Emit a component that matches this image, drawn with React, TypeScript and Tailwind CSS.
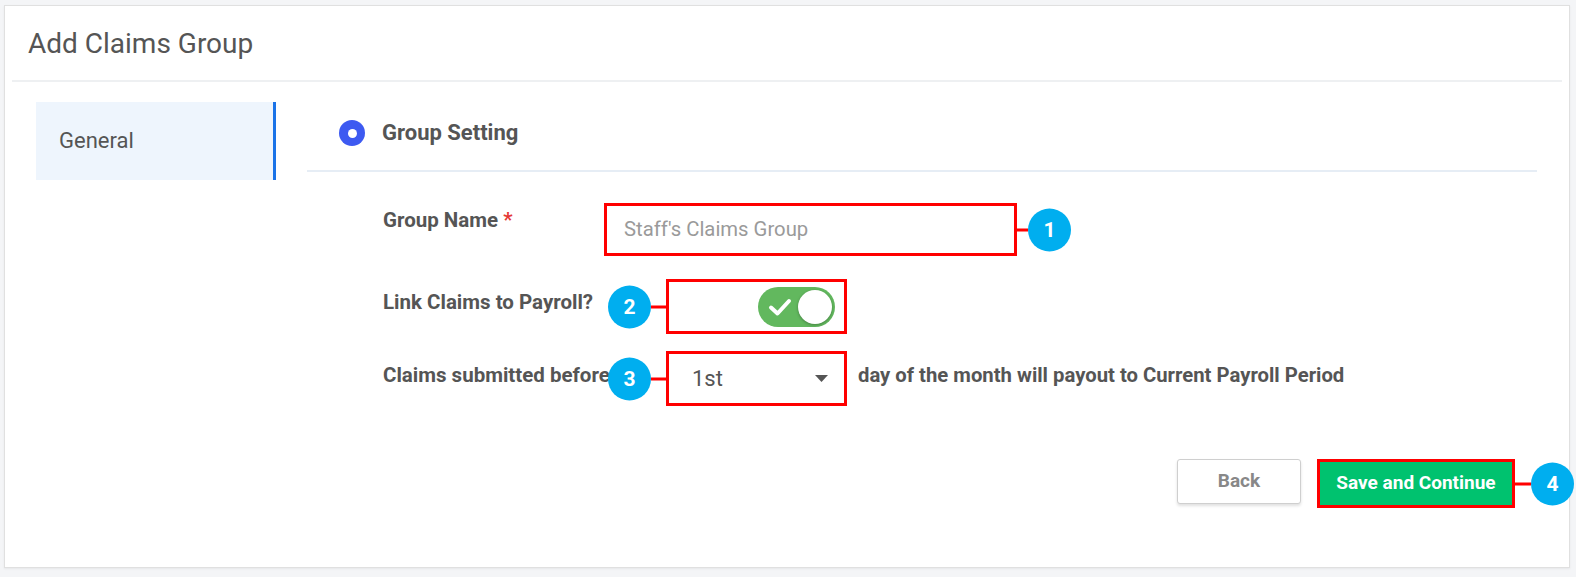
import React from "react";

function Badge({ n }: { n: string }) {
  return (
    <div className="flex h-[43px] w-[43px] items-center justify-center rounded-full bg-[#00aeef] text-[21px] font-bold leading-none text-white">
      {n}
    </div>
  );
}

export default function App() {
  return (
    <div
      className="min-h-[577px] w-[1576px] bg-[#f4f5f7] pl-[4px] pt-[5px]"
      style={{ fontFamily: "Roboto, 'Liberation Sans', sans-serif" }}
    >
      <div className="relative h-[563px] w-[1566px] border border-[#e0e0e0] bg-white shadow-[0_1px_2px_rgba(0,0,0,0.06)]">
        {/* Header */}
        <div className="flex h-[74px] items-center pl-[23px] pt-[2px]">
          <h1 className="text-[28px] font-normal leading-none text-[#555]">Add Claims Group</h1>
        </div>
        <div className="mx-[7px] h-[2px] bg-[#eef0f2]" />

        {/* Body */}
        <div className="flex pt-[20px]">
          {/* Sidebar */}
          <div className="ml-[31px] w-[240px]">
            <div className="flex h-[78px] items-center border-r-[3px] border-[#1a73e8] bg-[#eef5fd] pl-[23px] text-[22px] leading-none text-[#555]">
              General
            </div>
          </div>

          {/* Content */}
          <div className="ml-[31px] w-[1230px]">
            <div className="flex h-[60px] items-center pl-[32px] pt-[2px]">
              <div className="flex h-[26px] w-[26px] items-center justify-center rounded-full bg-[#3d5af1]">
                <div className="h-[9px] w-[9px] rounded-full bg-white" />
              </div>
              <span className="ml-[17px] text-[22px] font-bold leading-none text-[#555]">Group Setting</span>
            </div>
            <div className="mt-[8px] h-[2px] bg-[#e6edf5]" />

            {/* Row 1 */}
            <div className="mt-[31px] flex pl-[76px]">
              <div className="w-[221px] pt-[2px] text-[20.5px] font-bold text-[#555]">
                Group Name <span className="text-[#e53935]">*</span>
              </div>
              <div className="relative flex h-[53px] w-[413px] items-center border-[3px] border-[#ff0000] pl-[17px] text-[20.3px] text-[#9a9a9a]">
                Staff's Claims Group
                <div className="absolute left-full top-1/2 h-[3px] w-[14px] -translate-y-1/2 bg-[#ff0000]" />
                <div className="absolute left-[calc(100%+14px)] top-1/2 -translate-y-1/2">
                  <Badge n="1" />
                </div>
              </div>
            </div>

            {/* Row 2 */}
            <div className="mt-[23px] flex items-center pl-[76px]">
              <div className="w-[221px] -translate-y-[4px] whitespace-nowrap text-[20.5px] font-bold text-[#555]">
                Link Claims to Payroll?
              </div>
              <div className="relative ml-[62px] flex h-[55px] w-[181px] items-center justify-end border-[3px] border-[#ff0000] pr-[9px]">
                <div className="flex h-[40px] w-[77px] items-center justify-between rounded-full bg-[#62b85e] pl-[10px] pr-[3px]">
                  <svg width="24" height="20" viewBox="0 0 24 20">
                    <path d="M3 10.5 L9.5 16.5 L21 4" fill="none" stroke="white" strokeWidth="4" strokeLinecap="round" strokeLinejoin="round" />
                  </svg>
                  <div className="h-[34px] w-[34px] rounded-full bg-white shadow-[0_1px_3px_rgba(0,0,0,0.3)]" />
                </div>
                <div className="absolute right-full top-1/2 h-[3px] w-[18px] -translate-y-1/2 bg-[#ff0000]" />
                <div className="absolute right-[calc(100%+18px)] top-1/2 -translate-y-1/2">
                  <Badge n="2" />
                </div>
              </div>
            </div>

            {/* Row 3 */}
            <div className="mt-[17px] flex items-center pl-[76px]">
              <div className="w-[221px] -translate-y-[3px] whitespace-nowrap text-[20.5px] font-bold text-[#555]">
                Claims submitted before
              </div>
              <div className="relative ml-[62px] flex h-[55px] w-[181px] items-center justify-between border-[3px] border-[#ff0000] pl-[23px] pr-[16px]">
                <span className="text-[22px] text-[#555]">1st</span>
                <svg width="13" height="7" viewBox="0 0 13 7">
                  <path d="M0 0 L13 0 L6.5 7 Z" fill="#555" />
                </svg>
                <div className="absolute right-full top-1/2 h-[3px] w-[18px] -translate-y-1/2 bg-[#ff0000]" />
                <div className="absolute right-[calc(100%+18px)] top-1/2 -translate-y-1/2">
                  <Badge n="3" />
                </div>
              </div>
              <span className="ml-[11px] -translate-y-[3px] whitespace-nowrap text-[20.3px] font-bold text-[#555]">
                day of the month will payout to Current Payroll Period
              </span>
            </div>

            {/* Buttons */}
            <div className="mt-[53px] flex items-start justify-end pr-[22px]">
              <button className="h-[45px] w-[124px] rounded-[3px] border border-[#cfcfcf] bg-white text-[19px] font-bold text-[#888] shadow-[0_2px_3px_rgba(0,0,0,0.12)]">
                Back
              </button>
              <div className="relative ml-[16px]">
                <button className="h-[49px] w-[198px] border-[3px] border-[#ff0000] bg-[#00c26f] text-[19px] font-bold text-white">
                  Save and Continue
                </button>
                <div className="absolute left-full top-1/2 h-[3px] w-[16px] -translate-y-1/2 bg-[#ff0000]" />
                <div className="absolute left-[calc(100%+16px)] top-1/2 -translate-y-1/2">
                  <Badge n="4" />
                </div>
              </div>
            </div>
          </div>
        </div>
      </div>
    </div>
  );
}
